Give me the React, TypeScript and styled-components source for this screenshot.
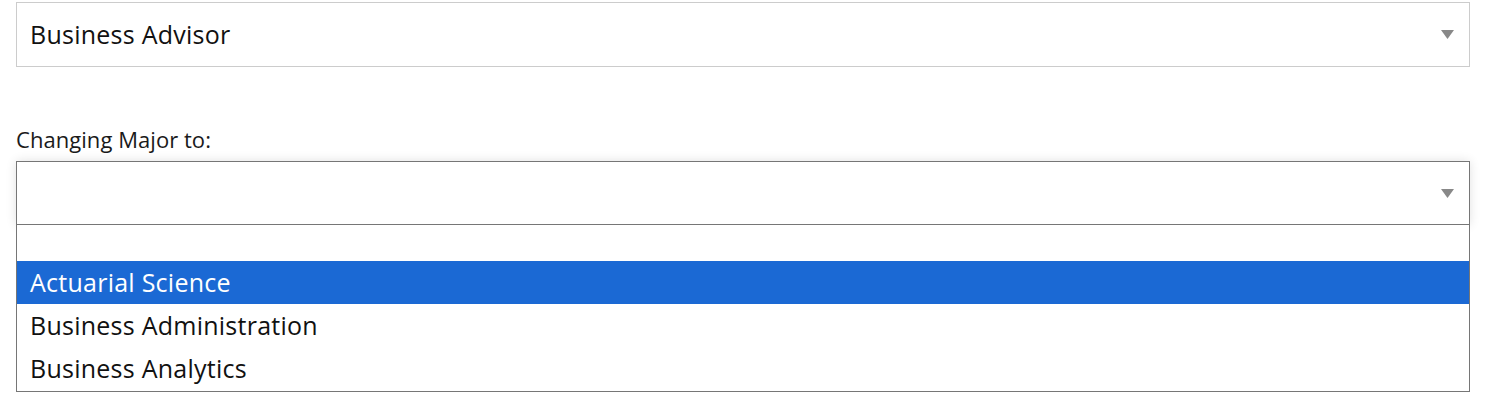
import React from 'react';
import styled, { createGlobalStyle } from 'styled-components';

const GlobalStyle = createGlobalStyle`
  body {
    margin: 0;
    background: #fff;
    font-family: 'Open Sans', 'Noto Sans', sans-serif;
    color: #111;
  }
`;

const Page = styled.div`
  width: 1454px;
  padding: 2px 0 0 16px;
  display: flex;
  flex-direction: column;
`;

const Field = styled.div<{ $top?: number }>`
  display: flex;
  flex-direction: column;
  margin-top: ${({ $top }) => $top ?? 0}px;
`;

const Label = styled.label`
  font-size: 22px;
  line-height: 28px;
  color: #1a1a1a;
  margin-bottom: 8px;
  letter-spacing: 0.05px;
`;

const SelectBox = styled.div<{ $open?: boolean }>`
  box-sizing: border-box;
  height: ${({ $open }) => ($open ? 64 : 65)}px;
  border: 1px solid ${({ $open }) => ($open ? '#767676' : '#cccccc')};
  background: #fff;
  display: flex;
  align-items: center;
  justify-content: space-between;
  padding: 0 14px 2px 13px;
  box-shadow: ${({ $open }) => ($open ? '0 0 10px rgba(0, 0, 0, 0.12)' : 'none')};
`;

const Value = styled.span`
  font-size: 25px;
  letter-spacing: 0.25px;
  color: #111;
`;

const Arrow = styled.svg`
  width: 13px;
  height: 9px;
  fill: #888;
  margin: 2px 1px 0 0;
`;

const Menu = styled.ul`
  margin: 0;
  padding: 0 0 1px;
  list-style: none;
  box-sizing: border-box;
  border: 1px solid #767676;
  border-top: none;
  background: #fff;
`;

const Option = styled.li<{ $selected?: boolean; $blank?: boolean }>`
  height: ${({ $blank }) => ($blank ? 36 : 43)}px;
  display: flex;
  align-items: center;
  padding: 0 0 2px 13px;
  box-sizing: border-box;
  font-size: 25px;
  letter-spacing: 0.25px;
  background: ${({ $selected }) => ($selected ? '#1b69d4' : '#fff')};
  color: ${({ $selected }) => ($selected ? '#fff' : '#111')};
`;

const CaretDown = () => (
  <Arrow viewBox="0 0 13 9">
    <path d="M0 0h13L6.5 9z" />
  </Arrow>
);

const majors = ['', 'Actuarial Science', 'Business Administration', 'Business Analytics'];

export default function App() {
  return (
    <>
      <GlobalStyle />
      <Page>
        <Field>
          <SelectBox>
            <Value>Business Advisor</Value>
            <CaretDown />
          </SelectBox>
        </Field>
        <Field $top={58}>
          <Label>Changing Major to:</Label>
          <SelectBox $open>
            <Value />
            <CaretDown />
          </SelectBox>
          <Menu>
            {majors.map((m, i) => (
              <Option key={i} $blank={m === ''} $selected={i === 1}>
                {m}
              </Option>
            ))}
          </Menu>
        </Field>
      </Page>
    </>
  );
}
